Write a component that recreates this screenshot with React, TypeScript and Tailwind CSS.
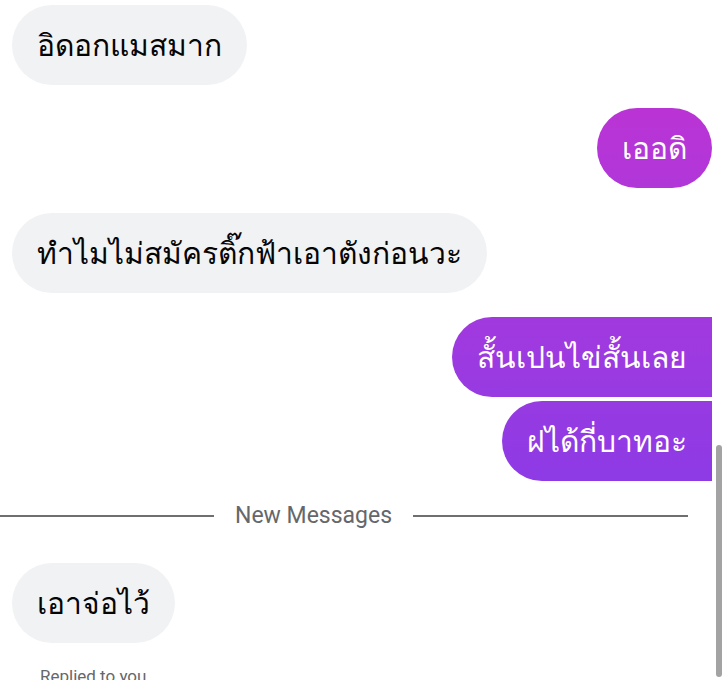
import React from 'react';

type Msg = { text: string; mine: boolean; shape?: string };

const BEFORE: Msg[] = [
  { text: 'อิดอกแมสมาก', mine: false },
  { text: 'เออดิ', mine: true },
  { text: 'ทำไมไม่สมัครติ๊กฟ้าเอาตังก่อนวะ', mine: false },
  { text: 'สั้นเปนไข่สั้นเลย', mine: true, shape: 'rounded-l-full rounded-tr-[40px] rounded-br-[5px]' },
  { text: 'ฝได้กี่บาทอะ', mine: true, shape: 'rounded-l-full rounded-tr-[5px] rounded-br-[40px]' },
];

const GAPS = ['mt-0', 'mt-[23px]', 'mt-[25px]', 'mt-[24px]', 'mt-[4px]'];

function Bubble({ msg, className }: { msg: Msg; className?: string }) {
  return (
    <div className={`flex ${msg.mine ? 'justify-end' : 'justify-start'} ${className ?? ''}`}>
      <div
        className={
          msg.mine
            ? `h-[80px] px-[25px] flex items-center text-white bg-fixed bg-linear-to-b from-[#c72ed0] to-[#7538ee] ${msg.shape ?? 'rounded-full'}`
            : 'h-[80px] px-[25px] flex items-center text-[#050505] bg-[#f1f2f4] rounded-full'
        }
      >
        <span className="text-[30px] leading-[36px]">{msg.text}</span>
      </div>
    </div>
  );
}

export default function App() {
  return (
    <div className="relative w-[728px] h-[680px] overflow-hidden bg-white font-['Noto_Sans','Liberation_Sans',sans-serif]">
      <div className="flex flex-col pt-[5px] pl-3 pr-4">
        {BEFORE.map((m, i) => (
          <Bubble key={i} msg={m} className={GAPS[i]} />
        ))}
      </div>

      {/* divider */}
      <div className="mt-[20px] h-[30px] flex items-center pr-[40px]">
        <div className="w-[214px] h-[2px] bg-[#6f6f6f]" />
        <span className="px-[21px] text-[23px] text-[#65676b] font-['Roboto','Liberation_Sans',sans-serif]">New Messages</span>
        <div className="flex-1 h-[2px] bg-[#6f6f6f]" />
      </div>

      <div className="flex flex-col pl-3 pr-4 mt-[32px]">
        <Bubble msg={{ text: 'เอาจ่อไว้', mine: false }} />
        <div className="mt-[22px] pl-[28px] text-[17px] leading-[22px] text-[#65676b] font-['Roboto','Liberation_Sans',sans-serif]">Replied to you</div>
      </div>

      {/* overlay scrollbar */}
      <div className="absolute right-[6px] top-[445px] w-[6px] h-[232px] rounded-full bg-[#a3a3a3]" />
    </div>
  );
}
